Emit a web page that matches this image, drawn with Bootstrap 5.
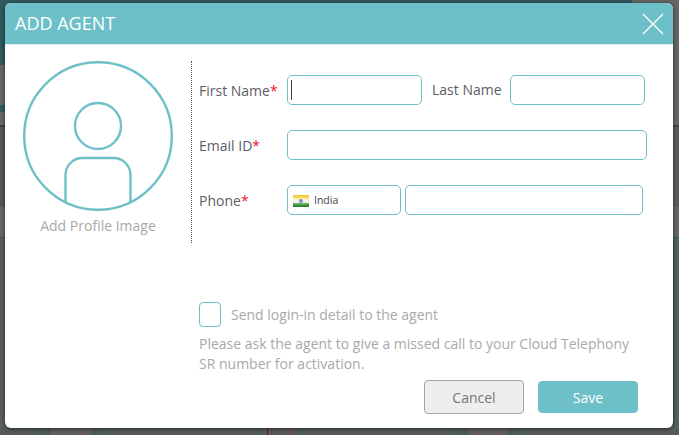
<!DOCTYPE html>
<html lang="en">
<head>
<meta charset="utf-8">
<title>Add Agent</title>
<link href="https://cdn.jsdelivr.net/npm/bootstrap@5.3.0/dist/css/bootstrap.min.css" rel="stylesheet">
<style>
html,body{height:100%;margin:0;overflow:hidden}
body{background:#666;font-family:"Open Sans","Liberation Sans",sans-serif;color:#5d5d66;padding:3px 6px 7px 5px;position:relative}
.backdrop{position:absolute;left:0;top:0;width:679px;height:435px}
.dlg{height:425px;background:#fff;border-radius:6px;overflow:hidden;box-shadow:0 1px 5px rgba(0,0,0,.55);position:relative}
.dlg-head{height:41px;background:#6ec0c8;border-bottom:1px solid #dfeeef;color:#fff;font-size:18px;padding-left:10px;box-sizing:content-box}
.dlg-close{width:22px;height:22px;margin-right:9px}
.dlg-body{padding:16px 0 0 0;height:384px}
.side{width:186px;height:182px;flex:none;padding-left:18px}
.side-cap{font-size:14px;color:#a9a9a9;line-height:19px;width:150px;text-align:center;white-space:nowrap;margin-top:5px}
.divider{width:0;height:182px;border-left:1px dotted #555;flex:none}
.form-area{padding:15px 0 0 7px;flex:1}
.lbl{font-size:14px;line-height:20px;width:88px;flex:none;color:#5d5d66;padding-top:2px}
.req{color:#f5101e}
.fld{height:30px;border:1px solid #6ec0c8;border-radius:5px;background:#fff;padding:0 3px;font-size:12px;box-shadow:none;outline:0}
.frow{height:30px;margin-bottom:25px;margin-top:-1px}
.frow+.frow{margin-top:0}
.fld-a{width:135px}
.fld-b{width:135px}
.fld-c{width:360px}
.fld-d{width:114px;color:#3a4252;font-size:10.5px;padding:2px 0 0 5px;gap:5px}
.fld-e{width:238px;margin-left:4px}
.lbl2{width:88px;padding-left:10px;flex:none;font-size:14px;line-height:20px}
.caret-bar{width:1px;height:20px;background:#444}
.check-box{width:22px;height:25px;border:1px solid #6ec0c8;border-radius:4px;flex:none}
.opt-row{margin:87px 0 0 0;font-size:14px;color:#a9a9a9;line-height:19px;gap:10px}
.hint{font-size:14px;line-height:20px;color:#a9a9a9;margin:7px 0 0 0;width:440px}
.btn-cancel,.btn-save{width:100px;font-size:14px;padding:0;border-radius:4px}
.btn-cancel{height:34px;background:#eee;border:1px solid #a5a5a5;color:#777}
.btn-save{height:32px;margin-top:1px;background:#6ec0c8;border:1px solid #6ec0c8;color:#fff}
.actions{width:439px;gap:14px;margin-top:6px}
</style>
</head>
<body>
<svg class="backdrop" viewBox="0 0 679 435" aria-hidden="true">
  <rect width="679" height="435" fill="#676767"/>
  <rect width="632" height="3" fill="#305a5e"/>
  <rect width="6" height="65" fill="#305a5e"/>
  <rect y="105" width="6" height="7" fill="#2f5f63"/>
  <rect y="125" width="6" height="82" fill="#585858"/>
  <rect x="673" y="125" width="6" height="82" fill="#5c5c5c"/>
  <rect y="125" width="6" height="2" fill="#3f3f3f"/>
  <rect x="673" y="125" width="6" height="2" fill="#444"/>
  <rect y="237" width="6" height="1" fill="#2f5f63"/>
  <rect x="673" y="237" width="6" height="1" fill="#2f5f63"/>
  <rect y="238" width="6" height="197" fill="#5a605f"/>
  <rect x="673" y="238" width="6" height="197" fill="#5a605f"/>
  <rect x="673" y="238" width="1" height="190" fill="#2f5557"/>
  <rect y="428" width="679" height="7" fill="#565c5b"/>
  <rect x="50" y="428" width="42" height="7" fill="#625f5e"/>
  <rect x="467" y="428" width="42" height="7" fill="#625f5e"/>
  <rect x="267" y="428" width="30" height="7" fill="#5f5a5a"/>
  <g stroke="#2f5f63" stroke-width="1" fill="none">
    <path d="M49.500 428V435M92.500 428V435M257.500 428V435M302.500 428V435M466.500 428V435M509.500 428V435"/>
    <path d="M37 428 49 435M104 428 92 435M454 428 466 435M521 428 509 435"/>
  </g>
  <path d="M267.500 428V435" stroke="#333" stroke-width="1"/>
</svg>
<div class="dlg">
  <div class="dlg-head d-flex align-items-center justify-content-between">
    <span>ADD AGENT</span>
    <svg class="dlg-close" viewBox="0 0 22 22" fill="none" stroke="#fff" stroke-width="1.4"><path d="M1 1 21 21M21 1 1 21"/></svg>
  </div>
  <div class="dlg-body d-flex">
    <div class="side">
      <svg width="150" height="150" viewBox="0 0 150 150" fill="none" stroke="#6ec0c8" stroke-width="2.4"><circle cx="75" cy="75" r="73.800"/><circle cx="75" cy="65" r="23"/><path d="M42.500 141V114a17 17 0 0 1 17-17h31a17 17 0 0 1 17 17V141"/></svg>
      <div class="side-cap">Add Profile Image</div>
    </div>
    <div class="divider"></div>
    <div class="form-area">
      <div class="frow d-flex align-items-center">
        <span class="lbl">First Name<span class="req">*</span></span>
        <div class="fld fld-a d-flex align-items-center"><span class="caret-bar"></span></div>
        <span class="lbl2">Last Name</span>
        <input class="fld fld-b" type="text" aria-label="Last Name">
      </div>
      <div class="frow d-flex align-items-center">
        <span class="lbl">Email ID<span class="req">*</span></span>
        <input class="fld fld-c" type="text" aria-label="Email ID">
      </div>
      <div class="frow d-flex align-items-center">
        <span class="lbl">Phone<span class="req">*</span></span>
        <div class="fld fld-d d-flex align-items-center">
          <svg width="16" height="12" viewBox="0 0 16 12"><defs><linearGradient id="flagg" x1="0" y1="0" x2="0" y2="1"><stop offset="0" stop-color="#e8c020"/><stop offset=".3" stop-color="#fbe88a"/><stop offset=".4" stop-color="#f6f6f0"/><stop offset=".62" stop-color="#eef2e6"/><stop offset=".72" stop-color="#5cb04e"/><stop offset="1" stop-color="#1e7a2c"/></linearGradient></defs><rect width="16" height="12" fill="url(#flagg)"/><circle cx="8" cy="6" r="2" fill="#8a8ac8"/></svg>
          <span>India</span>
        </div>
        <input class="fld fld-e" type="text" aria-label="Phone number">
      </div>
      <div class="opt-row d-flex align-items-center">
        <span class="check-box"></span><span>Send login-in detail to the agent</span>
      </div>
      <p class="hint">Please ask the agent to give a missed call to your Cloud Telephony SR number for activation.</p>
      <div class="actions d-flex justify-content-end align-items-start">
        <button type="button" class="btn btn-cancel">Cancel</button>
        <button type="button" class="btn btn-save">Save</button>
      </div>
    </div>
  </div>
</div>
<script src="https://cdn.jsdelivr.net/npm/bootstrap@5.3.0/dist/js/bootstrap.bundle.min.js"></script>
</body>
</html>
